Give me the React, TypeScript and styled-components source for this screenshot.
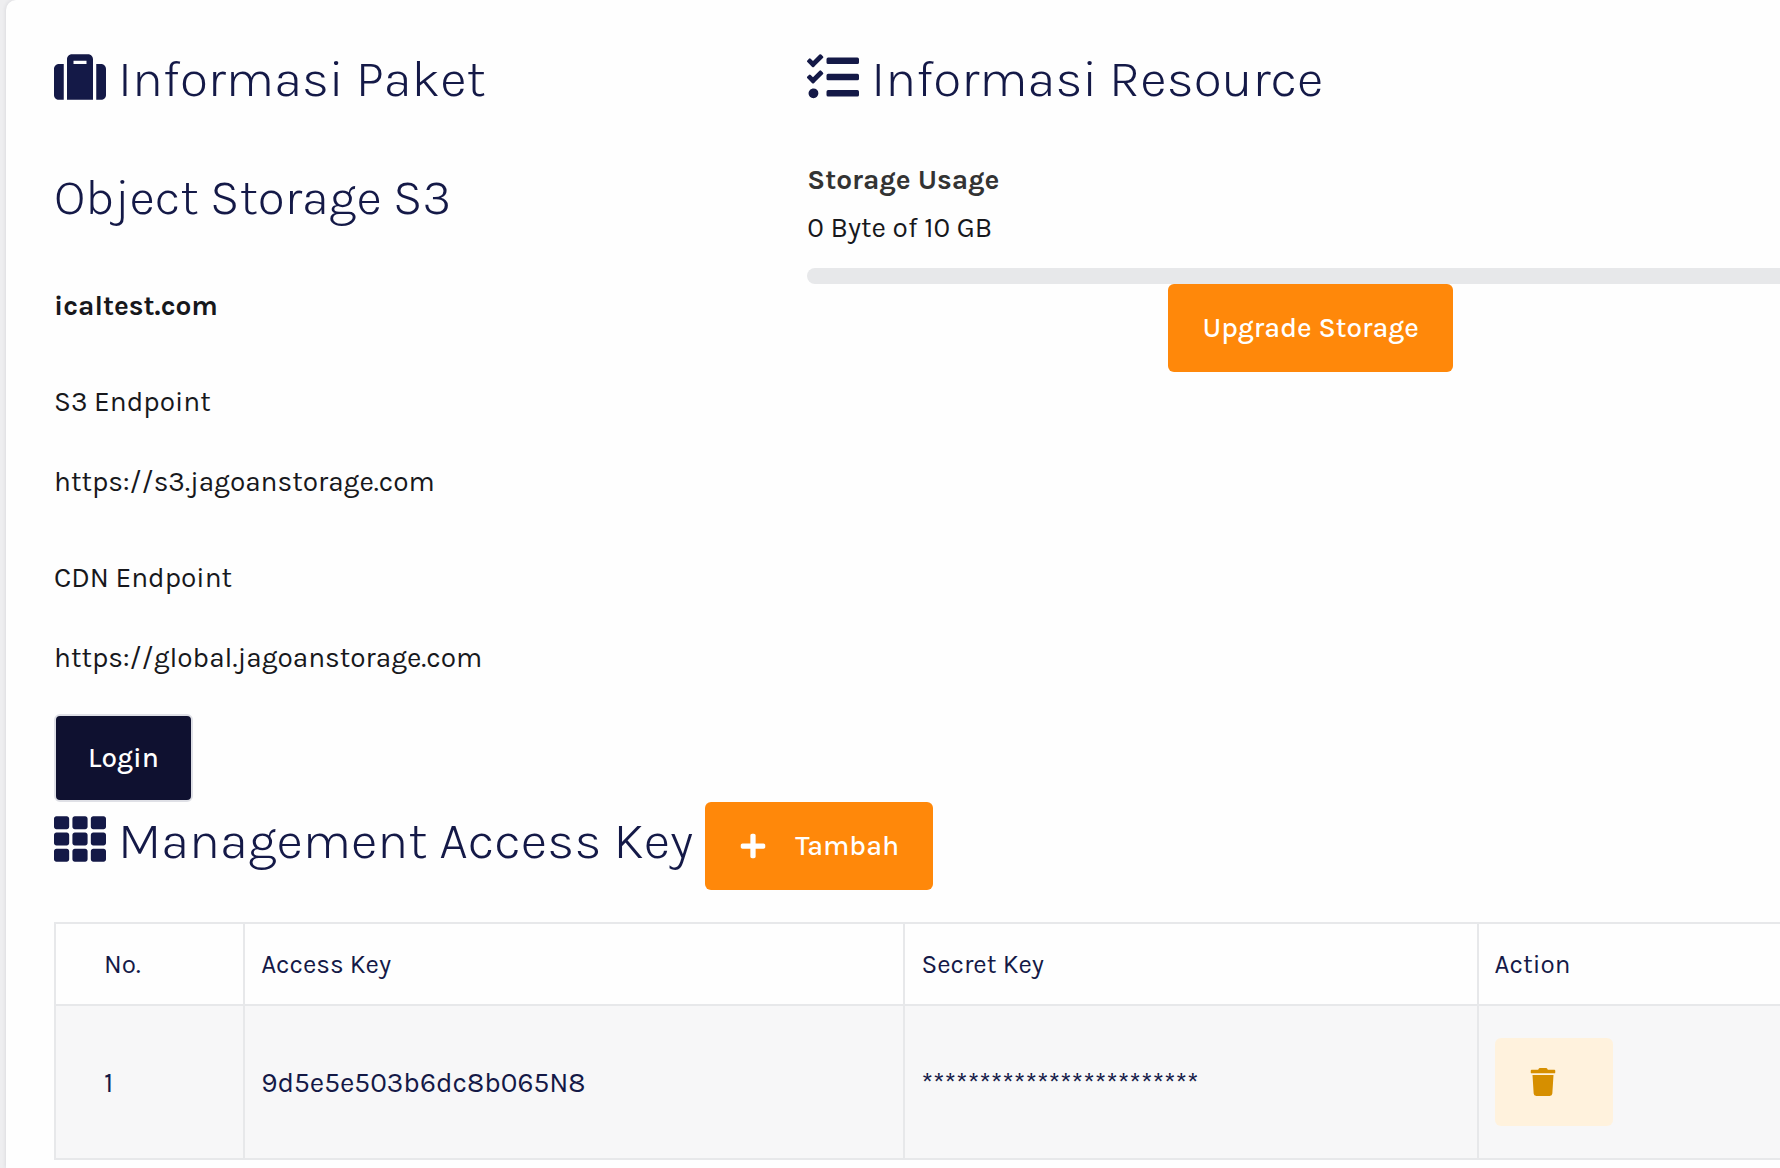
import React from "react";
import styled, { createGlobalStyle } from "styled-components";
import { FaPlus, FaSuitcase, FaTasks, FaTh, FaTrash } from "react-icons/fa";

const navy = "#141947";
const orange = "#ff880a";
const line = "#e7e8ea";

const GlobalStyle = createGlobalStyle`
  *, *::before, *::after { box-sizing: border-box; }
  body {
    margin: 0;
    background: #eeeef0;
    color: #17181c;
    font-family: Karla, Inter, "Liberation Sans", sans-serif;
    font-size: 28px;
    line-height: 48px;
  }
`;

const Page = styled.div`
  padding-left: 6px;
  overflow-x: hidden;
`;

const Card = styled.main`
  min-height: 100vh;
  margin-right: -34px;
  padding: 48px 0 8px 48px;
  background: #fefefe;
  border-top-left-radius: 10px;
  box-shadow: 0 0 4px rgba(30, 30, 60, 0.12);
`;

const Columns = styled.div`
  display: grid;
  grid-template-columns: 5fr 7fr;
  margin: 0 -24px;
`;

const Column = styled.section`
  min-width: 0;
  padding: 0 24px;
`;

const Heading = styled.h2`
  display: flex;
  align-items: center;
  gap: 12px;
  margin: 0;
  padding-bottom: 2px;
  color: ${navy};
  font-size: 52px;
  font-weight: 300;
  line-height: 62px;

  svg {
    flex: none;
    width: 52px;
    height: 52px;
    margin-bottom: 4px;
  }
`;

const PlanName = styled.h3`
  margin: 54px 0 52px;
  color: ${navy};
  font-size: 50px;
  font-weight: 300;
  line-height: 64px;
`;

const Domain = styled.p`
  margin: 0 0 48px;
  font-weight: 700;
`;

const Endpoints = styled.dl`
  display: grid;
  gap: 48px;
  margin: 0 0 32px;
`;

const Endpoint = styled.div`
  display: grid;
  gap: 32px;
`;

const Term = styled.dt`
  margin: 0;
`;

const Value = styled.dd`
  margin: 0;
`;

const Button = styled.button<{ $tone: "navy" | "orange" | "pale" }>`
  display: inline-flex;
  align-items: center;
  gap: 28px;
  height: 88px;
  padding: ${(p) => ({ navy: "0 32px", orange: "0 34px", pale: "0 56px 0 34px" })[p.$tone]};
  border: ${(p) => (p.$tone === "navy" ? "2px solid #dfe0e6" : "0")};
  border-radius: 6px;
  background: ${(p) => ({ navy: "#0f1130", orange, pale: "#fff2dd" })[p.$tone]};
  color: ${(p) => (p.$tone === "pale" ? "#d68f00" : "#fff")};
  font: inherit;
  font-weight: 500;
  vertical-align: middle;
  cursor: pointer;
`;

const UsageTitle = styled.h4`
  margin: 44px 0 0;
  color: #333;
  font-size: 28px;
  font-weight: 700;
  line-height: 48px;
`;

const Usage = styled.label`
  display: block;
`;

const Meter = styled.progress`
  display: block;
  width: 100%;
  height: 16px;
  margin-top: 16px;
  border: 0;
  border-radius: 8px;
  background: ${line};
  overflow: hidden;
  appearance: none;

  &::-webkit-progress-bar { background: ${line}; }
  &::-webkit-progress-value { background: ${orange}; }
`;

const Center = styled.div`
  display: flex;
  justify-content: center;
`;

const Toolbar = styled.div`
  display: flex;
  align-items: center;
  gap: 12px;

  ${Heading} {
    padding-bottom: 10px;
  }
`;

const Table = styled.table`
  width: 100%;
  margin-top: 32px;
  border-collapse: collapse;
  table-layout: fixed;
  color: ${navy};

  th, td {
    padding: 2px 16px 0;
    border: 2px solid ${line};
    text-align: left;
    font-weight: 400;
  }
  th { height: 82px; font-size: 26px; }
  td { height: 154px; background: #f7f7f8; }
  th:first-child, td:first-child { padding-left: 48px; }
  td:last-child { padding-top: 0; }
`;

const Col = styled.col<{ $width: string }>`
  width: ${(p) => p.$width};
`;

const keys = [{ id: 1, access: "9d5e5e503b6dc8b065N8", secret: "************************" }];

export default function App() {
  return (
    <Page>
      <GlobalStyle />
      <Card>
        <Columns>
          <Column>
            <Heading><FaSuitcase aria-hidden />Informasi Paket</Heading>
            <PlanName>Object Storage S3</PlanName>
            <Domain>icaltest.com</Domain>
            <Endpoints>
              <Endpoint>
                <Term>S3 Endpoint</Term>
                <Value>https://s3.jagoanstorage.com</Value>
              </Endpoint>
              <Endpoint>
                <Term>CDN Endpoint</Term>
                <Value>https://global.jagoanstorage.com</Value>
              </Endpoint>
            </Endpoints>
            <Button type="button" $tone="navy">Login</Button>
          </Column>
          <Column>
            <Heading><FaTasks aria-hidden />Informasi Resource</Heading>
            <UsageTitle>Storage Usage</UsageTitle>
            <Usage htmlFor="usage">0 Byte of 10 GB</Usage>
            <Meter id="usage" value={0} max={10} />
            <Center>
              <Button type="button" $tone="orange">Upgrade Storage</Button>
            </Center>
          </Column>
        </Columns>
        <Toolbar>
          <Heading><FaTh aria-hidden />Management Access Key</Heading>
          <Button type="button" $tone="orange"><FaPlus aria-hidden />Tambah</Button>
        </Toolbar>
        <Table>
          <colgroup>
            <Col $width="10.76%" />
            <Col $width="37.56%" />
            <Col $width="32.6%" />
            <Col $width="19.08%" />
          </colgroup>
          <thead>
            <tr>
              <th scope="col">No.</th>
              <th scope="col">Access Key</th>
              <th scope="col">Secret Key</th>
              <th scope="col">Action</th>
            </tr>
          </thead>
          <tbody>
            {keys.map((k) => (
              <tr key={k.id}>
                <td>{k.id}</td>
                <td>{k.access}</td>
                <td>{k.secret}</td>
                <td>
                  <Button type="button" $tone="pale" aria-label="Hapus"><FaTrash aria-hidden /></Button>
                </td>
              </tr>
            ))}
          </tbody>
        </Table>
      </Card>
    </Page>
  );
}
